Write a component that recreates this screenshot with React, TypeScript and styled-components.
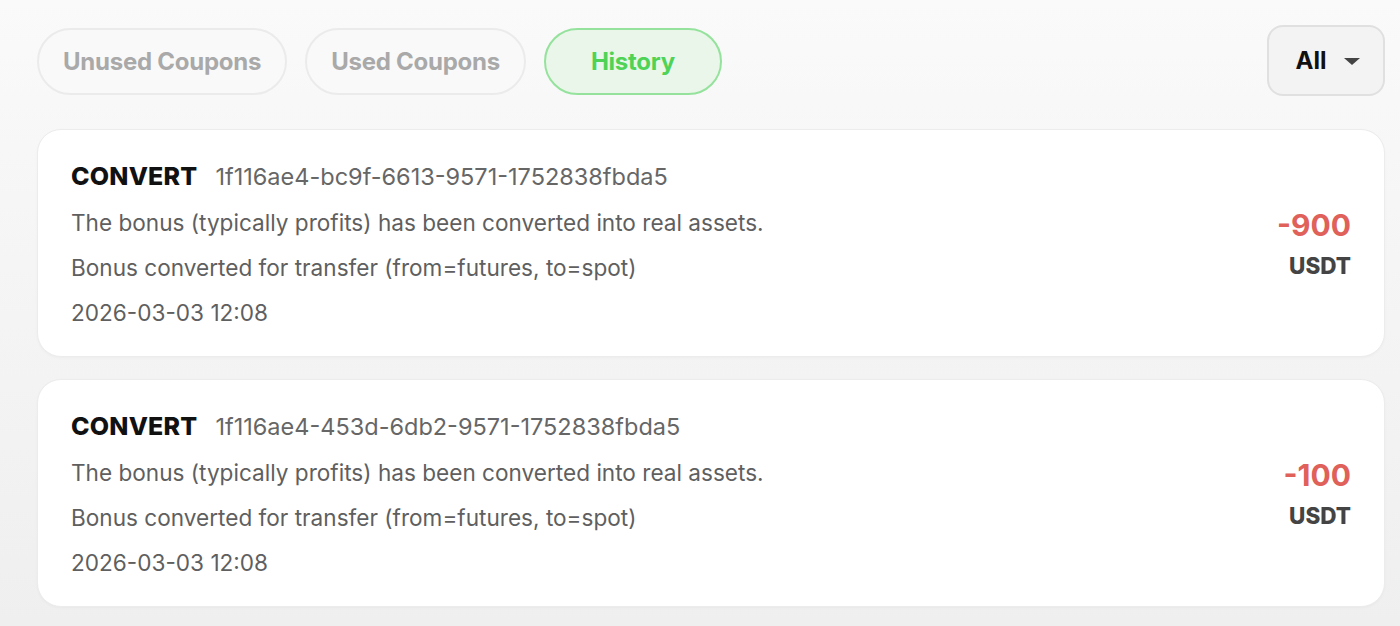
import { FC } from 'react';
import styled, { createGlobalStyle } from 'styled-components';

const GlobalStyle = createGlobalStyle`
  html, body {
    margin: 0;
    padding: 0;
  }
  body {
    font-family: Inter, "Noto Sans", "Liberation Sans", sans-serif;
    background: linear-gradient(180deg, #fafafa 0px, #f6f6f6 200px, #efefef 626px);
    min-height: 626px;
  }
`;

const Page = styled.div`
  padding: 25px 15px 0 37px;
  display: flex;
  flex-direction: column;
  gap: 33px;
`;

const Toolbar = styled.div`
  display: flex;
  align-items: center;
  justify-content: space-between;
`;

const Tabs = styled.div`
  display: flex;
  gap: 18px;
  padding-top: 2px;
`;

const Tab = styled.button<{ $active?: boolean }>`
  height: 67px;
  min-width: 178px;
  padding: 0 24px;
  border-radius: 34px;
  border: 2px solid ${p => (p.$active ? '#95e29d' : '#ebebeb')};
  background: ${p => (p.$active ? '#eaf6e9' : '#f9f9f9')};
  color: ${p => (p.$active ? '#4fd357' : '#a9a9a9')};
  font-family: inherit;
  font-size: 24px;
  font-weight: 700;
  letter-spacing: -0.25px;
  cursor: pointer;
`;

const Select = styled.button`
  width: 118px;
  height: 71px;
  display: flex;
  align-items: center;
  justify-content: center;
  gap: 18px;
  border-radius: 16px;
  border: 2px solid #e0e0e0;
  background: #f3f3f3;
  color: #111;
  font-family: inherit;
  font-size: 24px;
  font-weight: 700;
  padding: 0 0 0 4px;
`;

const Caret = styled.span`
  width: 0;
  height: 0;
  border-left: 8px solid transparent;
  border-right: 8px solid transparent;
  border-top: 7px solid #444;
  margin-top: 2px;
`;

const List = styled.div`
  display: flex;
  flex-direction: column;
  gap: 22px;
`;

const Card = styled.div`
  background: #fff;
  border-radius: 24px;
  border: 1px solid #ececec;
  box-shadow: 0 1px 3px rgba(0, 0, 0, 0.03);
  padding: 31px 33px 0 33px;
  display: flex;
  justify-content: space-between;
  align-items: flex-start;
  height: 228px;
  box-sizing: border-box;
`;

const Info = styled.div`
  display: flex;
  flex-direction: column;
`;

const TitleRow = styled.div`
  display: flex;
  align-items: baseline;
  gap: 18px;
  height: 39px;
`;

const Type = styled.span`
  font-size: 25px;
  font-weight: 800;
  color: #111;
  letter-spacing: 0.2px;
`;

const TxId = styled.span`
  font-size: 23.5px;
  color: #666;
`;

const Line = styled.div`
  font-size: 22.6px;
  color: #5f5f5f;
  line-height: 45px;
`;

const Amount = styled.div`
  display: flex;
  flex-direction: column;
  align-items: flex-end;
  gap: 9px;
  margin-top: 46px;
`;

const Value = styled.span`
  font-size: 30px;
  font-weight: 700;
  color: #e0605a;
`;

const Unit = styled.span`
  font-size: 22.5px;
  font-weight: 800;
  color: #444;
`;

interface Record {
  type: string;
  id: string;
  desc: string;
  note: string;
  time: string;
  amount: string;
  unit: string;
}

const records: Record[] = [
  {
    type: 'CONVERT',
    id: '1f116ae4-bc9f-6613-9571-1752838fbda5',
    desc: 'The bonus (typically profits) has been converted into real assets.',
    note: 'Bonus converted for transfer (from=futures, to=spot)',
    time: '2026-03-03 12:08',
    amount: '-900',
    unit: 'USDT',
  },
  {
    type: 'CONVERT',
    id: '1f116ae4-453d-6db2-9571-1752838fbda5',
    desc: 'The bonus (typically profits) has been converted into real assets.',
    note: 'Bonus converted for transfer (from=futures, to=spot)',
    time: '2026-03-03 12:08',
    amount: '-100',
    unit: 'USDT',
  },
];

const HistoryCard: FC<{ record: Record }> = ({ record }) => (
  <Card>
    <Info>
      <TitleRow>
        <Type>{record.type}</Type>
        <TxId>{record.id}</TxId>
      </TitleRow>
      <Line>{record.desc}</Line>
      <Line>{record.note}</Line>
      <Line>{record.time}</Line>
    </Info>
    <Amount>
      <Value>{record.amount}</Value>
      <Unit>{record.unit}</Unit>
    </Amount>
  </Card>
);

const App: FC = () => (
  <>
    <GlobalStyle />
    <Page>
      <Toolbar>
        <Tabs>
          <Tab>Unused Coupons</Tab>
          <Tab>Used Coupons</Tab>
          <Tab $active>History</Tab>
        </Tabs>
        <Select>
          All
          <Caret />
        </Select>
      </Toolbar>
      <List>
        {records.map(r => (
          <HistoryCard key={r.id} record={r} />
        ))}
      </List>
    </Page>
  </>
);

export default App;
